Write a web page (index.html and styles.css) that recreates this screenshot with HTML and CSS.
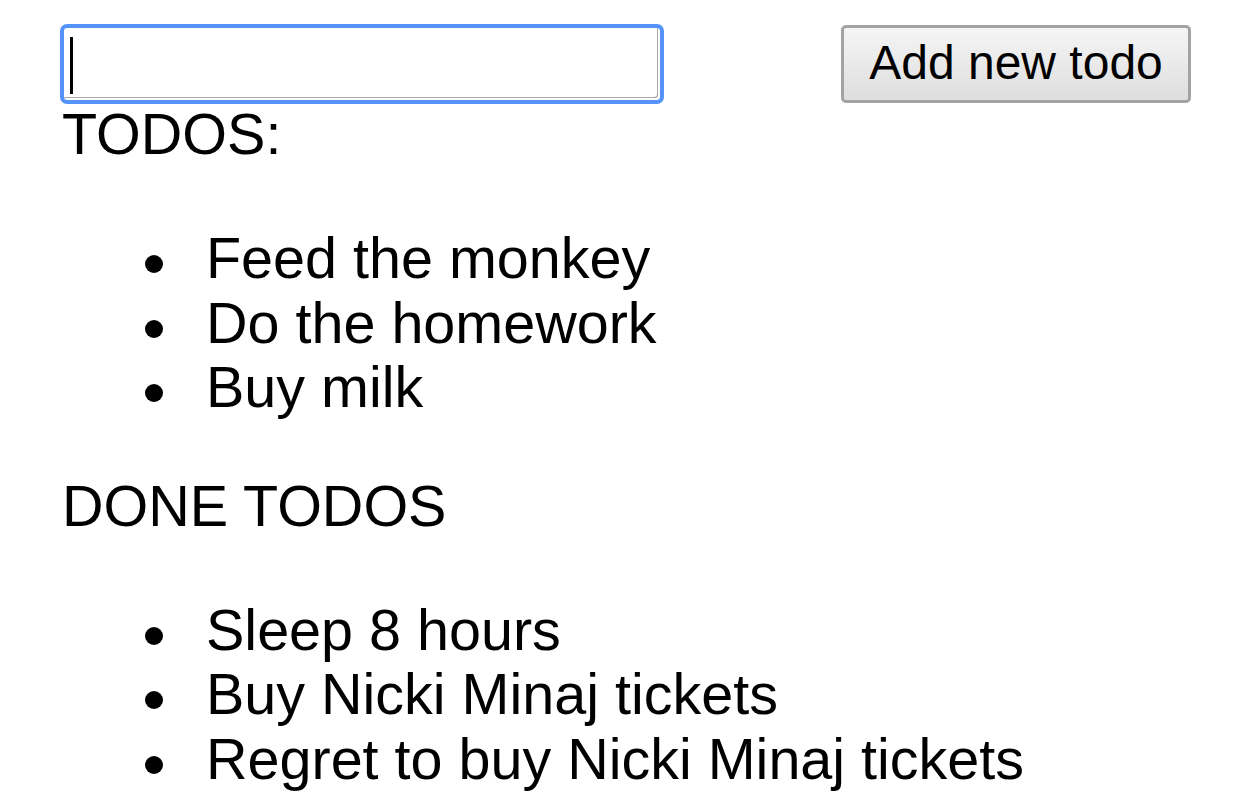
FILE: index.html
```html
<!DOCTYPE html>
<html lang="en">
<head>
<meta charset="utf-8">
<title>Todos</title>
<link rel="stylesheet" href="styles.css">
</head>
<body>
  <div class="app">
    <div class="entry-row">
      <div class="field">
        <input class="todo-input" type="text" aria-label="New todo">
        <span class="caret"></span>
      </div>
      <button class="add-btn" type="button">Add new todo</button>
    </div>
    <div class="section-title">TODOS:</div>
    <ul class="todo-list todo-list--open">
      <li>Feed the monkey</li>
      <li>Do the homework</li>
      <li>Buy milk</li>
    </ul>
    <div class="section-title">DONE TODOS</div>
    <ul class="todo-list todo-list--done">
      <li>Sleep 8 hours</li>
      <li>Buy Nicki Minaj tickets</li>
      <li>Regret to buy Nicki Minaj tickets</li>
    </ul>
  </div>
</body>
</html>
```

FILE: styles.css
```css
html, body {
  margin: 0;
  padding: 0;
  background: #ffffff;
}

body {
  font-family: "Liberation Sans", Arial, sans-serif;
  font-size: 57.5px;
  line-height: 64.4px;
  color: #000000;
  overflow: hidden;
}

.app {
  padding: 28px 0 0 62px;
}

.entry-row {
  display: flex;
  align-items: center;
  width: 1129px;
  height: 72px;
  margin-bottom: 2px;
  justify-content: space-between;
}

.field {
  position: relative;
  margin-left: 2px;
  width: 596px;
  height: 72px;
}

.todo-input {
  display: block;
  box-sizing: border-box;
  width: 596px;
  height: 72px;
  margin: 0;
  padding: 0 8px;
  border: 0;
  border-radius: 3px;
  background: #ffffff;
  font-family: "Liberation Sans", Arial, sans-serif;
  font-size: 46.67px;
  color: #000;
  box-shadow: inset -2px -2px 0 #ffffff, inset -3px -3px 0 #a9a9a9;
  outline: 4px solid #5593fc;
  outline-offset: 0;
}

.caret {
  position: absolute;
  left: 6px;
  top: 9px;
  width: 3px;
  height: 57px;
  background: #000;
}

.add-btn {
  box-sizing: border-box;
  width: 350px;
  height: 78px;
  margin: 0;
  padding: 0 0 2px;
  border: 3px solid #a3a3a3;
  border-radius: 5px;
  background: linear-gradient(#f5f5f5, #dedede);
  font-family: "Liberation Sans", Arial, sans-serif;
  font-size: 48px;
  color: #000;
  line-height: 1;
}

.section-title {
  margin: 0;
}

.todo-list {
  margin: 0;
  padding-left: 144px;
  list-style: none;
}

.todo-list li {
  position: relative;
}

.todo-list li::before {
  content: "";
  position: absolute;
  left: -61px;
  top: 29px;
  width: 18px;
  height: 18px;
  border-radius: 50%;
  background: #000;
}

.todo-list--open {
  margin-top: 60px;
  margin-bottom: 54px;
}

.todo-list--done {
  margin-top: 60px;
}
```
